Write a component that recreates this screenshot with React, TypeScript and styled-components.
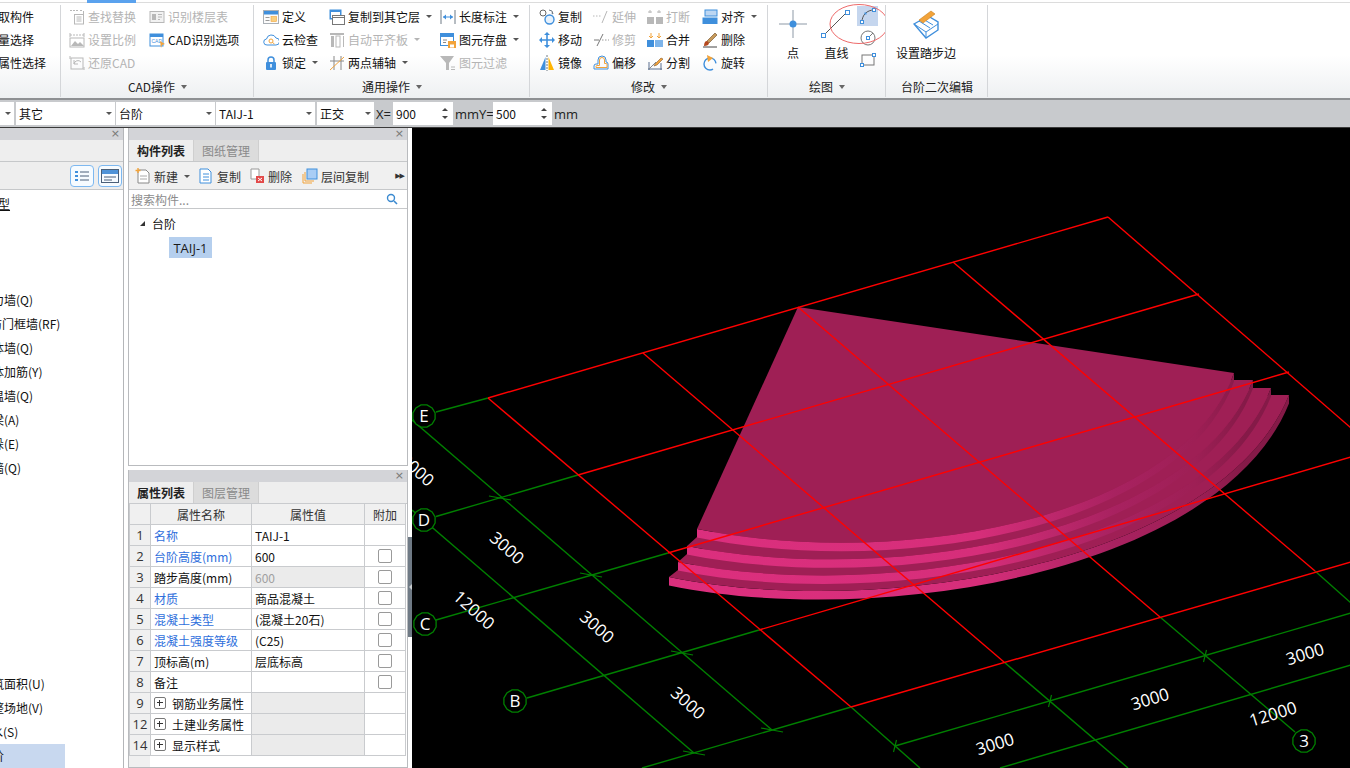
import React from 'react';
import styled, { createGlobalStyle } from 'styled-components';

const Global = createGlobalStyle`
  html, body { margin: 0; padding: 0; background: #fff; overflow: hidden; }
  * { box-sizing: border-box; }
  body { font-family: "Noto Sans CJK SC", "Noto Sans", sans-serif; font-size: 12px; color: #111; }
`;

const Root = styled.div`width: 1350px; height: 768px; display: flex; flex-direction: column; overflow: hidden;`;
const TopStrip = styled.div`height: 3px; background: #fff; border-bottom: 1px solid #dcdcdc; flex: none;`;
const ActiveTab = styled.div`height: 3px; width: 49px; margin-left: 87px; background: #5aa2ee;`;
const Ribbon = styled.div`
  height: 97px; flex: none; display: flex;
  background: linear-gradient(#ffffff 0%, #ffffff 55%, #eef0f2 100%);
  border-bottom: 2px solid #8e9093;
`;
const Group = styled.div<{ $w: number }>`
  width: ${p => p.$w}px; flex: none; position: relative; display: flex; flex-direction: column; overflow: hidden;
  &::after { content: ""; position: absolute; right: 0; top: 2px; bottom: 1px; width: 1px; background: #d4d6d9; }
`;
const GroupBody = styled.div<{ $pad?: number }>`
  height: 72px; padding: 2px 0 0 ${p => p.$pad ?? 0}px; display: flex; flex: none;
`;
const GroupLabel = styled.div`
  height: 23px; display: flex; align-items: center; justify-content: center; gap: 6px; color: #222; font-size: 12px;
`;
const GroupCaret = styled.i`
  width: 0; height: 0; border: 3.5px solid transparent; border-top: 4px solid #666; border-bottom: 0;
`;
const ToolCol = styled.div<{ $w?: number }>`
  width: ${p => (p.$w ? `${p.$w}px` : 'auto')}; flex: none; display: flex; flex-direction: column;
`;
const Tool = styled.div`height: 23px; display: flex; align-items: center; gap: 3px; white-space: nowrap;`;
const ToolText = styled.span<{ $off?: boolean }>`color: ${p => (p.$off ? '#b4b4b4' : '#111')}; line-height: 16px;`;
const Caret = styled.i<{ $off?: boolean }>`
  width: 0; height: 0; margin-left: 3px;
  border: 3px solid transparent; border-top: 3px solid ${p => (p.$off ? '#b4b4b4' : '#555')}; border-bottom: 0;
`;
const ClippedCol = styled(ToolCol)`margin-left: -2px;`;
const IconSvg = styled.svg`flex: none; display: block;`;
const LargeTool = styled.div<{ $w: number }>`
  width: ${p => p.$w}px; flex: none; display: flex; flex-direction: column; align-items: center; gap: 1px;
`;
const LargeIcon = styled.div`height: 38px; display: flex; align-items: center; justify-content: center;`;
const SmallCol = styled.div`width: 21px; flex: none; margin-left: 2px; display: flex; flex-direction: column; gap: 2px; padding-top: 1px;`;
const SmallBtn = styled.div<{ $on?: boolean }>`
  height: 20px; display: flex; align-items: center; justify-content: center; background: ${p => (p.$on ? '#c5d6ee' : 'transparent')};
`;
const Annotation = styled.svg`position: absolute; left: 61px; top: 0; pointer-events: none;`;

const OptionBar = styled.div`
  height: 28px; flex: none; background: #c8cacd; border-bottom: 1px solid #3a3a3a; display: flex; align-items: center;
`;
const Combo = styled.div<{ $w: number; $ml?: number }>`
  width: ${p => p.$w}px; height: 23px; margin-left: ${p => p.$ml ?? 1}px; flex: none; background: #fff; padding: 0 3px;
  display: flex; align-items: center; justify-content: space-between;
`;
const ComboArrow = styled.i`width: 0; height: 0; border: 3px solid transparent; border-top: 3px solid #555; border-bottom: 0;`;
const FieldLabel = styled.span<{ $w: number }>`
  width: ${p => p.$w}px; flex: none; padding-left: 2px; color: #222; white-space: nowrap; font-size: 13px; font-family: "Open Sans", sans-serif;
`;
const SpinField = styled.div<{ $w: number }>`
  width: ${p => p.$w}px; height: 23px; flex: none; background: #fff; padding: 0 3px; display: flex; align-items: center; justify-content: space-between;
`;
const Spin = styled.div`display: flex; flex-direction: column; gap: 5px; margin-right: 2px;`;
const SpinUp = styled.i`width: 0; height: 0; border: 3px solid transparent; border-bottom: 3px solid #444; border-top: 0;`;
const SpinDown = styled.i`width: 0; height: 0; border: 3px solid transparent; border-top: 3px solid #444; border-bottom: 0;`;

const Main = styled.div`flex: 1; min-height: 0; display: flex; background: #fff;`;
const LeftPanel = styled.div`width: 124px; flex: none; border-right: 1px solid #b4b6b9; display: flex; flex-direction: column; overflow: hidden;`;
const TitleBar = styled.div`
  height: 12px; flex: none; background: #d3d4d8; display: flex; align-items: center; justify-content: flex-end; padding-right: 3px;
  color: #777; font-size: 11px; line-height: 12px; font-family: "DejaVu Sans", sans-serif;
`;
const LeftTabs = styled.div`height: 22px; flex: none; background: #eeeeee; border-bottom: 1px solid #c6c8ca;`;
const LeftTools = styled.div`height: 28px; flex: none; background: #eeeeee; border-bottom: 1px solid #c6c8ca; display: flex; justify-content: flex-end; align-items: center; gap: 4px; padding-right: 1px;`;
const ViewBtn = styled.div`width: 24px; height: 22px; border: 1px solid #7db8f0; border-radius: 4px; background: #f6fbff; display: flex; align-items: center; justify-content: center;`;
const TreeList = styled.div`flex: 1; padding-top: 2px; overflow: hidden;`;
const TreeRow = styled.div<{ $on?: boolean }>`
  height: 24px; line-height: 24px; width: ${p => (p.$on ? '65px' : 'auto')}; background: ${p => (p.$on ? '#c8d8ef' : 'transparent')};
  white-space: nowrap; overflow: hidden;
`;
const TreeText = styled.span<{ $x: number; $u?: boolean }>`
  display: inline-block; margin-left: ${p => p.$x}px; text-decoration: ${p => (p.$u ? 'underline' : 'none')};
`;

const MidCol = styled.div`width: 280px; margin-left: 4px; flex: none; display: flex; flex-direction: column; gap: 4px; min-height: 0;`;
const Panel = styled.div<{ $h?: number }>`
  ${p => (p.$h ? `height: ${p.$h}px; flex: none;` : 'flex: 1; min-height: 0;')}
  display: flex; flex-direction: column; border: 1px solid #b9bbbe; border-top: 0; background: #fff; overflow: hidden;
`;
const Tabs = styled.div`height: 22px; flex: none; display: flex; background: #eeeeee; border-bottom: 1px solid #c6c8ca;`;
const TabItem = styled.div<{ $on?: boolean }>`
  width: 65px; display: flex; align-items: center; justify-content: center;
  font-weight: ${p => (p.$on ? 700 : 400)}; color: ${p => (p.$on ? '#222' : '#8a8a8a')};
  background: ${p => (p.$on ? '#eeeeee' : '#dcdcdc')}; border-right: 1px solid #cfcfcf;
`;
const ListTools = styled.div`height: 28px; flex: none; background: #f0f0f0; border-bottom: 1px solid #c6c8ca; display: flex; align-items: center; padding: 1px 0 0 6px;`;
const ListTool = styled.div<{ $w: number }>`width: ${p => p.$w}px; flex: none; display: flex; align-items: center; gap: 3px; color: #333; white-space: nowrap;`;
const More = styled.div`margin-left: auto; margin-right: 3px; font-size: 7px; color: #333; letter-spacing: -1px; font-family: "DejaVu Sans", sans-serif;`;
const SearchRow = styled.div`height: 19px; flex: none; border-bottom: 1px solid #c6c8ca; display: flex; align-items: center; justify-content: space-between; padding: 0 9px 0 2px; color: #8c8c8c;`;
const TreeBody = styled.div`flex: 1; padding: 3px 0 0 0;`;
const NodeRow = styled.div`height: 22px; display: flex; align-items: center; padding-left: 11px; gap: 7px;`;
const NodeArrow = styled.i`width: 0; height: 0; border-left: 5px solid transparent; border-bottom: 5px solid #333;`;
const LeafRow = styled.div`height: 22px; display: flex; padding-left: 40px; margin-top: 3px;`;
const Leaf = styled.div`width: 43px; height: 21px; background: #b5cfee; display: flex; align-items: center; justify-content: center; color: #1a1a1a; font-size: 13px; font-family: "Open Sans", sans-serif;`;

const PropTable = styled.table`
  border-collapse: collapse; table-layout: fixed; width: 276px; flex: none; margin-top: -1px;
  font-size: 12px; color: #111;
  td, th { border: 1px solid #c9cbce; height: 21px; padding: 0; font-weight: 400; }
`;
const Filler = styled.div`flex: 1; background: linear-gradient(90deg, #f0f0f0 21px, #fff 21px);`;
const HeadCell = styled.th`background: #f0f0f0; color: #333; text-align: center;`;
const IdxCell = styled.td`background: #f0f0f0; text-align: center; color: #333; font-family: "Open Sans", sans-serif; font-size: 13px;`;
const NameCell = styled.td<{ $blue?: boolean }>`padding-left: 3px !important; color: ${p => (p.$blue ? '#2f6fdc' : '#111')}; white-space: nowrap;`;
const ValCell = styled.td<{ $grey?: boolean; $muted?: boolean }>`
  padding-left: 3px !important; background: ${p => (p.$grey ? '#ebebeb' : '#fff')}; color: ${p => (p.$muted ? '#a0a0a0' : '#111')};
`;
const ExtraCell = styled.td`text-align: center;`;
const Check = styled.i`display: block; width: 14px; height: 14px; margin: 0 auto; border: 1px solid #9a9a9a; border-radius: 2px; background: #fff;`;
const GroupName = styled.div`display: flex; align-items: center; gap: 6px;`;
const Plus = styled.i`
  width: 12px; height: 12px; border: 1px solid #777; border-radius: 2px; position: relative; flex: none; display: block;
  &::before { content: ""; position: absolute; left: 2px; right: 2px; top: 4px; height: 1px; background: #333; }
  &::after { content: ""; position: absolute; top: 2px; bottom: 2px; left: 4px; width: 1px; background: #333; }
`;

const Splitter = styled.div`width: 4px; flex: none; padding-top: 409px;`;
const SplitHandle = styled.div`
  height: 100px; background: #6f7a85; display: flex; align-items: center; justify-content: center;
`;
const SplitArrow = styled.i`width: 0; height: 0; border: 3px solid transparent; border-right: 3px solid #c8ccd0; border-left: 0;`;
const Viewport = styled.div`flex: 1; min-width: 0; background: #000; overflow: hidden;`;
const Canvas = styled.svg`display: block; width: 938px; height: 640px;`;

type IP = { children: React.ReactNode; s?: number };
const I = ({ children, s = 16 }: IP) => <IconSvg width={s} height={s} viewBox="0 0 16 16" fill="none">{children}</IconSvg>;

const G = '#b8b8b8', B = '#3f8fdc', O = '#f2a33a', K = '#6f7a85';
const icons: Record<string, React.ReactNode> = {
  find: <I><path d="M1 1.500h8M11 1.500h2" stroke={G} strokeDasharray="2 1" /><path d="M14.500 2v3" stroke={G} /><rect x="5.500" y="5.500" width="9" height="9.500" stroke={G} /><path d="M7.500 8h5M7.500 10h5M7.500 12h5" stroke={G} /></I>,
  table: <I><rect x="1" y="2.500" width="14" height="11" stroke={G} fill="#f2f2f2" /><rect x="3" y="5" width="4" height="6" fill={G} /><path d="M9 5.500h4M9 8h4M9 10.500h2" stroke={G} /></I>,
  scale: <I><path d="M1 3h14" stroke={G} strokeDasharray="2 1" /><path d="M1 1v4M15 1v4" stroke={G} /><rect x="1" y="6" width="14" height="9" stroke={G} /><path d="M2 14l4-5 3 3 2-2 4 4z" fill={G} /></I>,
  cadopt: <I><rect x="1" y="2" width="13" height="12" stroke={B} fill="#fff" /><rect x="1" y="2" width="13" height="3" fill={B} /><text x="2.500" y="11" fontSize="5" fill={B} fontFamily="Liberation Sans">CAD</text><path d="M11 9l5 3-3 1-1 3z" fill={O} /></I>,
  restore: <I><rect x="2" y="3" width="12" height="11" stroke={G} /><path d="M5 9a4 4 0 0 1 7-2M5 5v4h4" stroke={G} /><path d="M1 1v3M15 12v3" stroke={G} /></I>,
  define: <I><rect x="0.500" y="1.500" width="15" height="13" stroke="#aab0b6" fill="#fbfbfb" /><rect x="1" y="2" width="14" height="3.500" fill={B} /><path d="M2.500 8.500h4M2.500 11.500h4" stroke="#999" /><rect x="8" y="7.500" width="5.500" height="5" fill="#f8cf80" stroke={O} strokeWidth=".6" /></I>,
  cloud: <I><path d="M4 13a3 3 0 0 1-.5-6A5 5 0 0 1 13 6a3.500 3.500 0 0 1 0 7z" stroke={B} fill="#fff" /><circle cx="8" cy="9" r="2" stroke={O} /><path d="M9.500 10.500l2 1.500" stroke={O} /></I>,
  lock: <I><path d="M5 7V5a3 3 0 0 1 6 0v2" stroke={B} strokeWidth="1.500" /><rect x="3" y="7" width="10" height="8" rx="1" fill={B} /><rect x="7.200" y="9" width="1.600" height="3.500" fill="#fff" /></I>,
  copyto: <I><rect x="0.500" y="0.500" width="12" height="10" fill={B} /><rect x="2" y="3" width="9" height="6" fill="#fff" /><rect x="3.500" y="6.500" width="12" height="9" fill="#fff" stroke="#777" /><path d="M3.500 8.500h12" stroke="#777" /></I>,
  autoalign: <I><rect x="1" y="1" width="14" height="2" fill={G} /><rect x="2" y="4" width="3" height="11" fill={G} /><rect x="7" y="4" width="4" height="11" stroke={G} fill="#fff" /><path d="M14.500 4v11" stroke={G} /></I>,
  twopoint: <I><path d="M5 1v14M12 1v14M1 6h14" stroke="#888" /><path d="M1 15L15 2" stroke={O} /></I>,
  dim: <I><path d="M1 1v14M15 1v14" stroke={K} /><path d="M3 8h10" stroke={B} /><path d="M3 8l3-2.500v5zM13 8l-3-2.500v5z" fill={B} /></I>,
  saveel: <I><rect x="0.500" y="1.500" width="13" height="12" stroke={B} fill="#fff" /><rect x="1" y="2" width="12" height="3" fill={B} /><path d="M3 8h4M3 10.500h3" stroke="#888" /><rect x="8" y="9" width="8" height="7" fill={O} /><rect x="10" y="12.500" width="4" height="3" fill="#fff" /></I>,
  filter: <I><path d="M0 1h14L9 8v7H6V8z" fill={G} /><path d="M11 12h4M11 14.500h4" stroke={G} /></I>,
  copy: <I><circle cx="4" cy="4" r="3" stroke="#666" fill="#fff" /><circle cx="10.500" cy="10.500" r="4.500" stroke={B} fill="#e8f2fc" strokeWidth="1.400" /><path d="M10 1a4 4 0 0 1 4 4l-1.500-1" stroke={K} /></I>,
  extend: <I><path d="M0 7h1.500M3 7h1.500M6 7h1.500" stroke={G} /><path d="M9 14L14 2" stroke={G} /></I>,
  move: <I><path d="M8 2v12M2 8h12" stroke={B} strokeWidth="1.600" /><path d="M8 0l3 3H5zM8 16l3-3H5zM0 8l3-3v6zM16 8l-3-3v6z" fill={B} /></I>,
  trim: <I><path d="M1 8h5" stroke="#777" /><path d="M9 8h1.500M12 8h1.500M15 8h1" stroke="#999" /><path d="M4 14L10 2" stroke="#777" /></I>,
  brk: <I><path d="M3 1v3M1 3h4M12 1v3M10 3h4" stroke={G} /><rect x="0" y="8" width="7" height="7" fill={G} /><rect x="9" y="8" width="7" height="7" fill={G} /></I>,
  merge: <I><path d="M4 1v4M2 4l2 2 2-2M12 1v4M10 4l2 2 2-2" stroke={O} /><rect x="0" y="8" width="7" height="7" fill={B} /><rect x="8" y="8" width="8" height="7" fill="#7db4ea" /></I>,
  mirror: <I><path d="M6.500 2v13H1z" fill={B} /><path d="M9.500 2v13H15z" fill="#ffb400" /><path d="M8 0v16" stroke={K} strokeDasharray="2 1" /></I>,
  offset: <I><path d="M1 14v-3a2 2 0 0 1 2-2h2V5a4 4 0 0 1 8 0v2a2 2 0 0 1 2 2v5z" stroke={B} /><path d="M3 12.500v-1a1 1 0 0 1 1-1h2.500V5a2.500 2.500 0 0 1 5 0v3.500h1.500a1 1 0 0 1 1 1v3z" stroke={O} /></I>,
  split: <I><path d="M1 14h14M2 7v8M14 8v7" stroke="#5b6f8f" /><path d="M2 14l7-7" stroke="#888" /><path d="M8 9l6-6 2 1-6 6-3 1z" fill={O} stroke="#8a5a2a" strokeWidth=".6" /></I>,
  align: <I><rect x="3" y="1" width="12" height="6" fill="#bcd6f2" stroke={B} /><rect x="0.500" y="8.500" width="15" height="6.500" fill={B} /></I>,
  erase: <I><path d="M1 15h14" stroke="#444" /><path d="M5 9l8-8 2 2-8 8z" fill="#c79a5a" stroke="#6b4a24" strokeWidth=".6" /><path d="M2 14c0-3 1-5 3-5l2 2c0 2-2 3-5 3z" fill="#b5481e" /></I>,
  rotate: <I><circle cx="8" cy="9" r="6" stroke={B} strokeWidth="1.400" strokeDasharray="30 8" strokeDashoffset="-6" /><path d="M5 0l6 3-5 4z" fill={O} /></I>,
};

const Ic = ({ n }: { n: string }) => <>{icons[n]}</>;

type T = { i: string; t: string; off?: boolean; caret?: boolean };
const ToolItem = ({ i, t, off, caret }: T) => (
  <Tool>
    <Ic n={i} />
    <ToolText $off={off}>{t}</ToolText>
    {caret && <Caret $off={off} />}
  </Tool>
);

const Cols = ({ cols }: { cols: { w?: number; items: T[] }[] }) => (
  <>
    {cols.map((c, idx) => (
      <ToolCol key={idx} $w={c.w}>
        {c.items.map(it => <ToolItem key={it.t} {...it} />)}
      </ToolCol>
    ))}
  </>
);

const cadCols = [
  { w: 80, items: [{ i: 'find', t: '查找替换', off: true }, { i: 'scale', t: '设置比例', off: true }, { i: 'restore', t: '还原CAD', off: true }] },
  { items: [{ i: 'table', t: '识别楼层表', off: true }, { i: 'cadopt', t: 'CAD识别选项' }] },
];
const commonCols = [
  { w: 66, items: [{ i: 'define', t: '定义' }, { i: 'cloud', t: '云检查' }, { i: 'lock', t: '锁定', caret: true }] },
  { w: 111, items: [{ i: 'copyto', t: '复制到其它层', caret: true }, { i: 'autoalign', t: '自动平齐板', off: true, caret: true }, { i: 'twopoint', t: '两点辅轴', caret: true }] },
  { items: [{ i: 'dim', t: '长度标注', caret: true }, { i: 'saveel', t: '图元存盘', caret: true }, { i: 'filter', t: '图元过滤', off: true }] },
];
const editCols = [
  { w: 54, items: [{ i: 'copy', t: '复制' }, { i: 'move', t: '移动' }, { i: 'mirror', t: '镜像' }] },
  { w: 54, items: [{ i: 'extend', t: '延伸', off: true }, { i: 'trim', t: '修剪', off: true }, { i: 'offset', t: '偏移' }] },
  { w: 55, items: [{ i: 'brk', t: '打断', off: true }, { i: 'merge', t: '合并' }, { i: 'split', t: '分割' }] },
  { items: [{ i: 'align', t: '对齐', caret: true }, { i: 'erase', t: '删除' }, { i: 'rotate', t: '旋转' }] },
];

const treeRows: [string, number][] = [
  ['型', -2], ['', 0], ['', 0], ['', 0], ['剪力墙(Q)', -20], ['人防门框墙(RF)', -22], ['砌体墙(Q)', -20], ['砌体加筋(Y)', -20], ['保温墙(Q)', -20], ['暗梁(A)', -20], ['墙垛(E)', -20], ['幕墙(Q)', -20],
  ['', 0], ['', 0], ['', 0], ['', 0], ['', 0], ['', 0], ['', 0], ['', 0], ['建筑面积(U)', -20], ['平整场地(V)', -20], ['散水(S)', -21], ['台阶', -20],
];

const props = [
  { n: '名称', v: 'TAIJ-1', blue: true, check: false },
  { n: '台阶高度(mm)', v: '600', blue: true, check: true },
  { n: '踏步高度(mm)', v: '600', muted: true, check: true },
  { n: '材质', v: '商品混凝土', blue: true, check: true },
  { n: '混凝土类型', v: '(混凝土20石)', blue: true, check: true },
  { n: '混凝土强度等级', v: '(C25)', blue: true, check: true },
  { n: '顶标高(m)', v: '层底标高', check: true },
  { n: '备注', v: '', check: true },
];
const propGroups = [{ i: 9, n: '钢筋业务属性' }, { i: 12, n: '土建业务属性' }, { i: 14, n: '显示样式' }];

type Seg = [number, number, number, number];
const red: Seg[] = [
  [488, 398, 1108, 217], [578, 475, 1199, 294], [668, 553, 1289, 372], [759, 630, 1351, 457], [851, 707, 1351, 562],
  [488, 398, 851, 707], [643, 353, 1004, 662], [798, 307, 1160, 617], [953, 262, 1315, 571], [1108, 217, 1351, 428],
];
const green: Seg[] = [
  [436, 412, 488, 398], [436, 516.5, 578, 475], [436, 620, 668, 553], [527, 698, 759, 630], [642, 768, 851, 707],
  [895, 746, 1351, 613], [1000, 768, 1351, 665], [412, 420, 772, 730], [412, 510, 694, 753],
  [851, 707, 920, 768], [1004, 662, 1128, 768], [1160, 617, 1295, 732], [1315, 571, 1351, 603],
];
const ticksFlat: [number, number][] = [[500, 498], [591, 575], [682, 653], [772, 730], [694, 753]];
const ticksX: [number, number][] = [[895, 746], [1050, 701], [1205, 656]];
const bubbles: [string, number, number][] = [['E', 424, 416], ['D', 424, 520], ['C', 425, 624], ['B', 515, 701], ['3', 1304, 741]];
const labels: [string, number, number, number][] = [
  ['3000', 417, 470, 42], ['3000', 507, 548, 42], ['3000', 597, 627, 42], ['3000', 688, 703, 42], ['12000', 474, 610, 42],
  ['3000', 995, 744, -17], ['3000', 1150, 699, -17], ['3000', 1305, 654, -17], ['12000', 1273, 714, -17],
];

const lefts: [number, number][] = [[697, 529], [687, 546], [678, 562], [669, 577]];
const rights: [number, number][] = [[1234, 373], [1253, 380], [1271, 388], [1289, 395]];
const arc = (k: number, dy = 0) => {
  const [lx, ly] = lefts[k];
  const [rx, ry] = rights[k];
  return {
    p0: [lx, ly + dy],
    c1: [900 - 6 * k, 570 + 17 * k + dy],
    c2: [1180 + 14 * k, 520 + 14 * k + dy],
    p3: [rx, ry + dy],
  };
};
const tread = (k: number) => {
  const a = arc(k);
  if (k === 0) return `M798 307 L${a.p0} C${a.c1} ${a.c2} ${a.p3} Z`;
  return `M${lefts[k - 1][0]} ${lefts[k - 1][1] + 8} L${a.p0} C${a.c1} ${a.c2} ${a.p3} L${rights[k - 1][0] - 1} ${rights[k][1]} Z`;
};
const riser = (k: number) => {
  const a = arc(k);
  const b = arc(k, 8.5);
  return `M${a.p0} C${a.c1} ${a.c2} ${a.p3} L${b.p3} C${b.c2} ${b.c1} ${b.p0} Z`;
};
const polygon = (x: number, y: number) =>
  Array.from({ length: 12 }, (_, i) => {
    const a = (i * Math.PI) / 6 + Math.PI / 12;
    return `${(x + 11.5 * Math.cos(a)).toFixed(1)},${(y + 11.5 * Math.sin(a)).toFixed(1)}`;
  }).join(' ');

const Scene = () => (
  <Canvas viewBox="412 128 938 640">
    <defs>
      <linearGradient id="rise" gradientUnits="userSpaceOnUse" x1="669" y1="0" x2="1288" y2="0">
        <stop offset="0" stopColor="#dc2f7e" />
        <stop offset="0.5" stopColor="#d62e7a" />
        <stop offset="0.72" stopColor="#a82260" />
        <stop offset="0.85" stopColor="#9e1f55" />
        <stop offset="0.93" stopColor="#851a48" />
        <stop offset="1" stopColor="#851a48" />
      </linearGradient>
    </defs>
    {[3, 2, 1, 0].map(k => (
      <g key={k}>
        <path d={riser(k)} fill="url(#rise)" />
        <path d={tread(k)} fill="#9f1f55" />
      </g>
    ))}
    {green.map((s, i) => <line key={i} x1={s[0]} y1={s[1]} x2={s[2]} y2={s[3]} stroke="#008000" strokeWidth="1.4" />)}
    {red.map((s, i) => <line key={i} x1={s[0]} y1={s[1]} x2={s[2]} y2={s[3]} stroke="#ff0000" strokeWidth="1.4" />)}
    {ticksFlat.map(([x, y], i) => (
      <path key={i} d={`M${x - 11} ${y - 2}L${x} ${y}L${x + 11} ${y + 2}`} stroke="#008000" strokeWidth="1.2" fill="none" />
    ))}
    {ticksX.map(([x, y], i) => (
      <path key={i} d={`M${x + 1.5} ${y - 6}L${x - 1.5} ${y + 6}`} stroke="#008000" strokeWidth="1.2" fill="none" />
    ))}
    {bubbles.map(([t, x, y]) => (
      <g key={t}>
        <polygon points={polygon(x, y)} fill="#000" stroke="#008000" strokeWidth="1.3" />
        <text x={x} y={y + 6} textAnchor="middle" fontSize="17" fill="#fff" fontFamily='"Open Sans", sans-serif'>{t}</text>
      </g>
    ))}
    {labels.map(([t, x, y, r], i) => (
      <text key={i} x={x} y={y + 6} textAnchor="middle" fontSize="17" fill="#fff" fontFamily='"Open Sans", sans-serif' transform={`rotate(${r} ${x} ${y})`}>{t}</text>
    ))}
  </Canvas>
);

export default function App() {
  return (
    <Root>
      <Global />
      <TopStrip><ActiveTab /></TopStrip>
      <Ribbon>
        <Group $w={61}>
          <GroupBody>
            <ClippedCol>
              <Tool><ToolText>取构件</ToolText></Tool>
              <Tool><ToolText>量选择</ToolText></Tool>
              <Tool><ToolText>属性选择</ToolText></Tool>
            </ClippedCol>
          </GroupBody>
          <GroupLabel />
        </Group>
        <Group $w={193}>
          <GroupBody $pad={8}><Cols cols={cadCols} /></GroupBody>
          <GroupLabel>CAD操作<GroupCaret /></GroupLabel>
        </Group>
        <Group $w={276}>
          <GroupBody $pad={9}><Cols cols={commonCols} /></GroupBody>
          <GroupLabel>通用操作<GroupCaret /></GroupLabel>
        </Group>
        <Group $w={238}>
          <GroupBody $pad={9}><Cols cols={editCols} /></GroupBody>
          <GroupLabel>修改<GroupCaret /></GroupLabel>
        </Group>
        <Group $w={118}>
          <GroupBody>
            <LargeTool $w={50}>
              <LargeIcon>
                <IconSvg width="32" height="32" viewBox="0 0 32 32" fill="none">
                  <path d="M16 2v28M2 16h28" stroke="#8d99a6" />
                  <circle cx="16" cy="16" r="3.500" fill={B} />
                </IconSvg>
              </LargeIcon>
              点
            </LargeTool>
            <LargeTool $w={37}>
              <LargeIcon>
                <IconSvg width="32" height="32" viewBox="0 0 32 32" fill="none">
                  <path d="M2 28L26 4" stroke="#555" />
                  <rect x="0.500" y="25.500" width="4" height="4" fill="#fff" stroke={B} />
                  <rect x="24.500" y="2.500" width="4" height="4" fill="#fff" stroke={B} />
                </IconSvg>
              </LargeIcon>
              直线
            </LargeTool>
            <SmallCol>
              <SmallBtn $on>
                <IconSvg width="18" height="18" viewBox="0 0 18 18" fill="none">
                  <path d="M3 15C3 8 8 3 15 3" stroke="#555" />
                  <rect x="1.500" y="13.500" width="3" height="3" fill="#fff" stroke={B} />
                  <rect x="13.500" y="1.500" width="3" height="3" fill="#fff" stroke={B} />
                  <rect x="5.500" y="5.500" width="2" height="2" fill={B} />
                </IconSvg>
              </SmallBtn>
              <SmallBtn>
                <IconSvg width="16" height="16" viewBox="0 0 16 16" fill="none">
                  <circle cx="8" cy="8" r="7" stroke="#777" />
                  <path d="M8 8L13 3" stroke="#777" />
                  <rect x="6.500" y="6.500" width="3" height="3" fill="#fff" stroke={B} />
                </IconSvg>
              </SmallBtn>
              <SmallBtn>
                <IconSvg width="16" height="14" viewBox="0 0 16 14" fill="none">
                  <rect x="2" y="2" width="12" height="10" stroke="#777" />
                  <rect x="0.500" y="10.500" width="3" height="3" fill="#fff" stroke={B} />
                  <rect x="12.500" y="0.500" width="3" height="3" fill="#fff" stroke={B} />
                </IconSvg>
              </SmallBtn>
            </SmallCol>
          </GroupBody>
          <GroupLabel>绘图<GroupCaret /></GroupLabel>
          <Annotation width="60" height="42" viewBox="0 0 60 42" fill="none">
            <ellipse cx="30" cy="21" rx="29" ry="19.500" stroke="#ee6a6a" />
          </Annotation>
        </Group>
        <Group $w={102}>
          <GroupBody>
            <LargeTool $w={80}>
              <LargeIcon>
                <IconSvg width="28" height="30" viewBox="0 0 28 30" fill="none">
                  <path d="M2 15l14-8 10 6v8l-12 8z" fill="#fff" stroke={B} strokeWidth="1.400" />
                  <path d="M2 15l12 8v6M14 23l12-8M7 12l11 7M11 10l10 6" stroke={B} />
                  <path d="M7 11l12-9 4 3-12 9z" fill="#f2a33a" stroke="#c77f1d" strokeWidth=".6" />
                </IconSvg>
              </LargeIcon>
              设置踏步边
            </LargeTool>
          </GroupBody>
          <GroupLabel>台阶二次编辑</GroupLabel>
        </Group>
      </Ribbon>
      <OptionBar>
        <Combo $w={14} $ml={0}><span /><ComboArrow /></Combo>
        <Combo $w={99} $ml={2}>其它<ComboArrow /></Combo>
        <Combo $w={99}>台阶<ComboArrow /></Combo>
        <Combo $w={99}>TAIJ-1<ComboArrow /></Combo>
        <Combo $w={57} $ml={2}>正交<ComboArrow /></Combo>
        <FieldLabel $w={19}>X=</FieldLabel>
        <SpinField $w={60}>900<Spin><SpinUp /><SpinDown /></Spin></SpinField>
        <FieldLabel $w={40}>mmY=</FieldLabel>
        <SpinField $w={59}>500<Spin><SpinUp /><SpinDown /></Spin></SpinField>
        <FieldLabel $w={30}>mm</FieldLabel>
      </OptionBar>
      <Main>
        <LeftPanel>
          <TitleBar>×</TitleBar>
          <LeftTabs />
          <LeftTools>
            <ViewBtn>
              <IconSvg width="16" height="14" viewBox="0 0 16 14" fill="none">
                <path d="M1 2h3v2H1zM1 6h3v2H1zM1 10h3v2H1z" fill={B} />
                <path d="M6 3h9M6 7h9M6 11h9" stroke="#4a5f78" />
              </IconSvg>
            </ViewBtn>
            <ViewBtn>
              <IconSvg width="18" height="14" viewBox="0 0 18 14" fill="none">
                <rect x="0.500" y="0.500" width="17" height="13" stroke="#4a5f78" />
                <rect x="1" y="1" width="16" height="4" fill="#4f93d8" />
                <path d="M3 8h12M3 11h8" stroke="#4a5f78" />
              </IconSvg>
            </ViewBtn>
          </LeftTools>
          <TreeList>
            {treeRows.map(([t, x], i) => (
              <TreeRow key={i} $on={i === treeRows.length - 1}>
                {t && <TreeText $x={x} $u={i === 0}>{t}</TreeText>}
              </TreeRow>
            ))}
          </TreeList>
        </LeftPanel>
        <MidCol>
          <Panel $h={338}>
            <TitleBar>×</TitleBar>
            <Tabs>
              <TabItem $on>构件列表</TabItem>
              <TabItem>图纸管理</TabItem>
            </Tabs>
            <ListTools>
              <ListTool $w={63}>
                <I><path d="M3 2h8l3 3v10H3z" stroke="#888" fill="#fff" /><path d="M5 8h7M5 11h7" stroke="#aaa" /><path d="M3 0v5M0.500 2.500h5" stroke={O} strokeWidth="1.400" /></I>
                新建<Caret />
              </ListTool>
              <ListTool $w={51}>
                <I><path d="M2 1h8l3 3v11H2z" stroke={B} fill="#fff" /><path d="M5 6h6M5 9h6M5 12h6" stroke={B} /></I>
                复制
              </ListTool>
              <ListTool $w={53}>
                <I><path d="M2 1h8v10H2z" stroke="#999" fill="#fff" /><rect x="7" y="8" width="8" height="7" fill="#e34a4a" /><path d="M9 10l4 3M13 10l-4 3" stroke="#fff" /></I>
                删除
              </ListTool>
              <ListTool $w={70}>
                <I><path d="M1 6v9h9" stroke={O} /><path d="M3 4v9h9" stroke={O} /><rect x="5" y="1" width="10" height="10" fill="#a9cdf5" stroke={B} /></I>
                层间复制
              </ListTool>
              <More>▶▶</More>
            </ListTools>
            <SearchRow>
              搜索构件...
              <IconSvg width="12" height="12" viewBox="0 0 12 12" fill="none">
                <circle cx="5" cy="5" r="3.500" stroke="#3b8ad0" strokeWidth="1.400" />
                <path d="M8 8l3 3" stroke="#3b8ad0" strokeWidth="1.600" />
              </IconSvg>
            </SearchRow>
            <TreeBody>
              <NodeRow><NodeArrow />台阶</NodeRow>
              <LeafRow><Leaf>TAIJ-1</Leaf></LeafRow>
            </TreeBody>
          </Panel>
          <Panel>
            <TitleBar>×</TitleBar>
            <Tabs>
              <TabItem $on>属性列表</TabItem>
              <TabItem>图层管理</TabItem>
            </Tabs>
            <PropTable>
              <colgroup>
                <col width="21" /><col width="101" /><col width="113" /><col width="41" />
              </colgroup>
              <thead>
                <tr>
                  <HeadCell />
                  <HeadCell>属性名称</HeadCell>
                  <HeadCell>属性值</HeadCell>
                  <HeadCell>附加</HeadCell>
                </tr>
              </thead>
              <tbody>
                {props.map((p, i) => (
                  <tr key={p.n}>
                    <IdxCell>{i + 1}</IdxCell>
                    <NameCell $blue={p.blue}>{p.n}</NameCell>
                    <ValCell $grey={p.muted} $muted={p.muted}>{p.v}</ValCell>
                    <ExtraCell>{p.check && <Check />}</ExtraCell>
                  </tr>
                ))}
                {propGroups.map(g => (
                  <tr key={g.i}>
                    <IdxCell>{g.i}</IdxCell>
                    <NameCell><GroupName><Plus />{g.n}</GroupName></NameCell>
                    <ValCell $grey />
                    <ExtraCell />
                  </tr>
                ))}
              </tbody>
            </PropTable>
            <Filler />
          </Panel>
        </MidCol>
        <Splitter><SplitHandle><SplitArrow /></SplitHandle></Splitter>
        <Viewport><Scene /></Viewport>
      </Main>
    </Root>
  );
}
